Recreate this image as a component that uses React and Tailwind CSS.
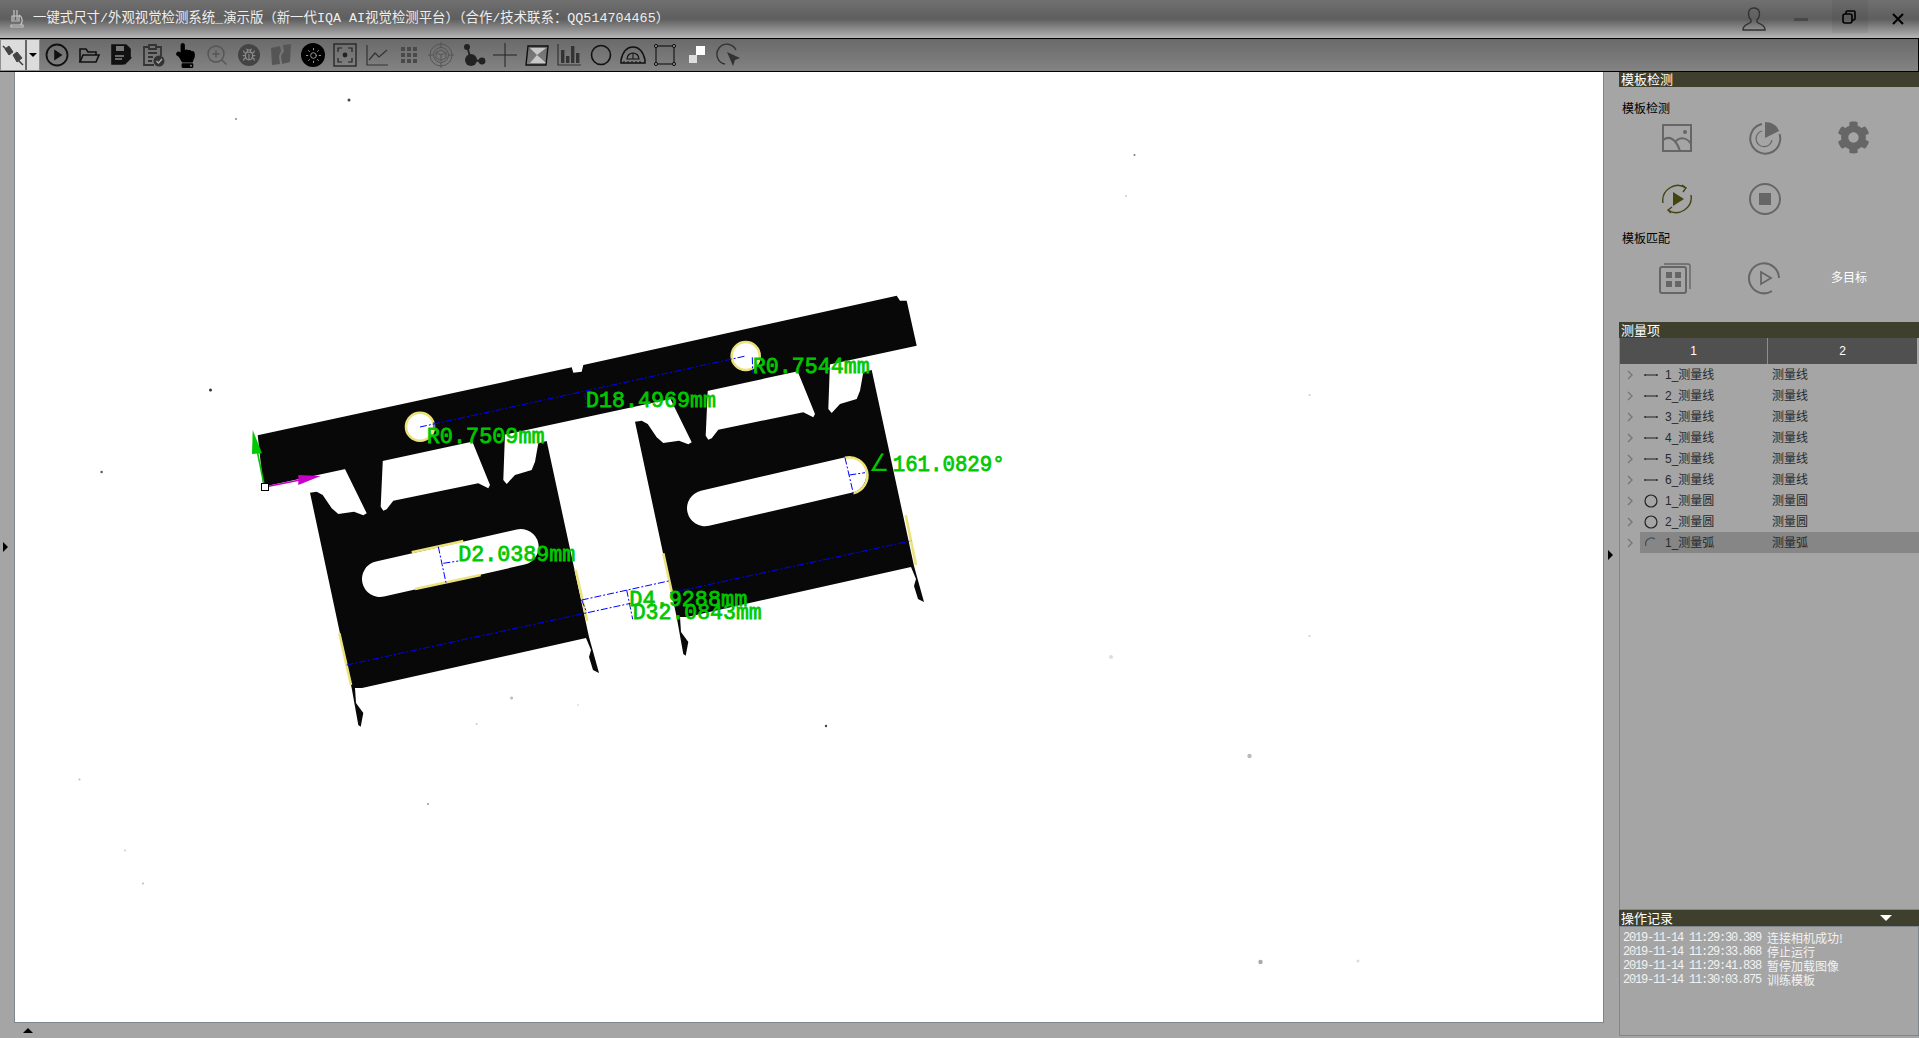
import { FaCog, FaHandPointUp } from 'react-icons/fa';
import { Bug, Sun, ZoomIn } from 'lucide-react';

const sans = "[font-family:'Liberation_Sans','Noto_Sans_CJK_SC',sans-serif]";

const Tool = ({ children }) => (
  <div className="w-8 h-full flex items-center justify-center shrink-0">
    <svg width="26" height="26" viewBox="0 0 26 26" fill="none" stroke="#111" strokeWidth="1.6">
      {children}
    </svg>
  </div>
);

const Toolbar = () => (
  <div className="h-[34px] flex items-stretch bg-gradient-to-b from-[#6a6a6a] to-[#838383] border-y border-r border-black shrink-0">
    {/* Plug button with its dropdown */}
    <div className="w-10 mr-[1px] flex shrink-0 bg-[#dcdcdc] border border-[#8f8f8f]">
      <div className="w-[26px] flex items-center justify-center border-r-2 border-[#666]">
        <svg width="22" height="22" viewBox="0 0 22 22" fill="#444" stroke="#444">
          <path d="M1 2l6 6M15 15l6 6" strokeWidth="1.6" />
          <path d="M3 5l4-3 4 6-4 3zM11 11l4-3 5 6-5 4z" />
        </svg>
      </div>
      <div className="flex-1 flex items-center justify-center">
        <div className="w-0 h-0 border-x-[4px] border-x-transparent border-t-[4px] border-t-black" />
      </div>
    </div>

    <Tool>
      <circle cx="13" cy="13" r="10.5" strokeWidth="1.8" />
      <path d="M11 9l6 4-6 4z" fill="#111" />
    </Tool>
    <Tool>
      <path d="M4 20V7h6l2 3h8v3" strokeWidth="1.6" />
      <path d="M4 20l3-7h16l-3 7z" strokeWidth="1.6" />
    </Tool>
    <Tool>
      <path d="M4 3h14l4 4v8l-7 7H4z" fill="#111" />
      <path d="M8 4h8v5H8z" fill="#777" stroke="none" />
      <path d="M7 14h9M7 17h7" stroke="#888" strokeWidth="1.4" />
      <path d="M16 22l7-7" strokeWidth="2.4" />
    </Tool>
    <Tool>
      <g stroke="#333" strokeWidth="1.8">
        <path d="M16 5h5v9M9 5H4v18h10" />
        <path d="M9 3h7v4H9zM8 11h9M8 15h5M8 19h4" />
      </g>
      <circle cx="19" cy="19" r="5.5" fill="#333" stroke="none" />
      <path d="M16.5 19l2 2 3.5-4" stroke="#aaa" strokeWidth="1.4" />
    </Tool>
    <div className="w-8 flex items-center justify-center shrink-0">
      <FaHandPointUp size={25} color="#000" />
    </div>
    <div className="w-8 flex items-center justify-center shrink-0">
      <ZoomIn size={24} color="#555" strokeWidth={1.4} />
    </div>
    <div className="w-8 flex items-center justify-center shrink-0">
      <div className="w-[22px] h-[22px] rounded-full bg-[#444] flex items-center justify-center">
        <Bug size={14} color="#8a8a8a" />
      </div>
    </div>
    <Tool>
      <path d="M3 6l9-2 1 5-2 5 1 8-8 1z" fill="#555" stroke="none" />
      <path d="M15 3l8-1-1 18-8 2-1-8 3-5z" fill="#555" stroke="none" />
    </Tool>
    <div className="w-8 flex items-center justify-center shrink-0">
      <div className="w-6 h-6 rounded-full bg-black flex items-center justify-center">
        <Sun size={17} color="#999" strokeWidth={1.4} />
      </div>
    </div>
    <Tool>
      <rect x="2" y="2" width="22" height="22" stroke="#222" strokeWidth="1.3" />
      <path d="M6 10V6h4M16 6h4v4M20 16v4h-4M10 20H6v-4" stroke="#222" strokeWidth="1.2" />
      <circle cx="13" cy="13" r="2.4" fill="#222" stroke="none" />
    </Tool>
    <Tool>
      <path d="M3 3v20h21" stroke="#333" strokeWidth="1.2" />
      <path d="M5 18l6-7 4 4 8-7" stroke="#333" strokeWidth="1.2" />
    </Tool>
    <Tool>
      <g fill="#4a4a4a" stroke="none">
        <rect x="5" y="5" width="4" height="4" />
        <rect x="11" y="5" width="4" height="4" />
        <rect x="17" y="5" width="4" height="4" />
        <rect x="5" y="11" width="4" height="4" />
        <rect x="11" y="11" width="4" height="4" />
        <rect x="17" y="11" width="4" height="4" />
        <rect x="5" y="17" width="4" height="4" />
        <rect x="11" y="17" width="4" height="4" />
        <rect x="17" y="17" width="4" height="4" />
      </g>
    </Tool>
    <Tool>
      <g stroke="#555" strokeWidth="1">
        <circle cx="13" cy="13" r="11" />
        <circle cx="13" cy="13" r="7.5" />
        <path d="M13 0v5M13 21v5M0 13h5M21 13h5" />
        <path d="M13 8l5 2.5v5.5l-5 2.5-5-2.5v-5.5zM8 10.5l5 2.5 5-2.5M13 13v5.5" />
      </g>
    </Tool>
    <Tool>
      <path d="M7 4l4 14M11 18l10 1" stroke="#222" strokeWidth="1.8" />
      <circle cx="7" cy="5" r="3" fill="#222" stroke="none" />
      <circle cx="11" cy="18" r="6" fill="#222" stroke="none" />
      <circle cx="22" cy="19" r="3.4" fill="#222" stroke="none" />
    </Tool>
    <Tool>
      <path d="M13 1v24M1 13h24" stroke="#222" strokeWidth="1" />
    </Tool>
    <Tool>
      <path d="M4 4h20l-2 19H2z" stroke="#111" strokeWidth="1.4" />
      <path d="M6 6h16l-9 7 9 8H6l7-8z" fill="#c8c8c8" stroke="none" />
    </Tool>
    <Tool>
      <path d="M2 2v21h23" stroke="#333" strokeWidth="1.2" />
      <g fill="#333" stroke="none">
        <rect x="5" y="8" width="3.4" height="13" />
        <rect x="10" y="14" width="3.4" height="7" />
        <rect x="15" y="4" width="3.4" height="17" />
        <rect x="20" y="11" width="3.4" height="10" />
      </g>
    </Tool>
    <Tool>
      <circle cx="13" cy="13" r="9.5" strokeWidth="1.6" />
    </Tool>
    <Tool>
      <path d="M1 21h24v-3C23 9 18 5 13 5S3 9 1 18z" strokeWidth="1.5" />
      <path d="M7 17a6 6 0 0 1 12 0z" strokeWidth="1.2" />
      <path d="M4 21v-2M8 21v-2M12 21v-2M16 21v-2M20 21v-2M13 11v6" strokeWidth="1" />
    </Tool>
    <Tool>
      <rect x="4" y="4" width="18" height="18" strokeWidth="1.1" />
      <g fill="#888" strokeWidth="1">
        <circle cx="4" cy="4" r="1.6" />
        <circle cx="22" cy="4" r="1.6" />
        <circle cx="4" cy="22" r="1.6" />
        <circle cx="22" cy="22" r="1.6" />
      </g>
    </Tool>
    <Tool>
      <rect x="12" y="4" width="9" height="9" fill="#fff" stroke="none" />
      <rect x="5" y="13" width="8" height="8" fill="#ddd" stroke="none" />
    </Tool>
    <Tool>
      <path d="M20 8A10 10 0 1 0 9 22" stroke="#333" strokeWidth="1.4" />
      <path d="M11 10l13 6-5 2-2 6z" fill="#333" stroke="none" />
    </Tool>
  </div>
);

const TitleBar = () => (
  <div className="h-[38px] flex items-center bg-gradient-to-b from-[#707070] via-[#5e5e5e] to-[#b6b6b6] shrink-0">
    <div className="w-[33px] flex justify-center shrink-0">
      <svg width="18" height="20" viewBox="0 0 18 20" fill="none" stroke="#c4c4c4" strokeWidth="1.2">
        <path d="M6 1v10M9 1v10M4 7h7v5H4zM3 18h12v-2H3zM11 6c4 2 4 8 1 10" />
      </svg>
    </div>
    <span className="text-[13.4px] text-[#eeeeee] [font-family:'Liberation_Mono','Noto_Sans_CJK_SC',monospace] whitespace-nowrap">
      一键式尺寸/外观视觉检测系统_演示版（新一代IQA AI视觉检测平台）（合作/技术联系：QQ514704465）
    </span>
    <div className="ml-auto flex items-center h-full">
      <svg width="26" height="26" viewBox="0 0 26 26" fill="none" stroke="#333" strokeWidth="1.4">
        <path d="M13 2c-4 0-5.500 3-5.500 6 0 3 1.500 5 2.500 6v2c-2 2-7 2-8 7v1h22v-1c-1-5-6-5-8-7v-2c1-1 2.500-3 2.500-6 0-3-1.500-6-5.500-6z" />
      </svg>
      <div className="w-[14px] h-[3px] bg-[#484848] ml-[27px]" />
      <div className="w-9 h-[33px] mb-[5px] ml-6 bg-black/5 flex items-center justify-center pr-[3px]">
        <svg width="14" height="14" viewBox="0 0 14 14" fill="none" stroke="#000" strokeWidth="1.6">
          <rect x="1" y="4" width="9" height="9" rx="2" />
          <path d="M4 4V2.500A1.500 1.500 0 0 1 5.500 1H12a1 1 0 0 1 1 1v6.500A1.500 1.500 0 0 1 11.500 10H10" />
        </svg>
      </div>
      <svg className="ml-6 mr-[15px]" width="12" height="12" viewBox="0 0 12 12" stroke="#000" strokeWidth="2">
        <path d="M1 1l10 10M11 1L1 11" />
      </svg>
    </div>
  </div>
);

const PANEL =
  '310,492.7 316.7,491.7 322.7,495 331.7,508.3 338.3,514 354,511.7 363.3,515.3 366.7,513.3 343,465 383,456 380.7,506.7 383.3,510.7 386.7,509.3 393.3,500.7 478.3,483.3 488.3,488.3 490,485 471.7,440 505,433 503.3,480 506.7,484 515,475 531.7,470 535,461.7 538.3,443.3 546.7,441 589,637 599,673 593,670 589,657 591,650 586,638 362,688 355,688 356,703 363.3,713 360.7,726.7 358.3,725 351.7,688.3';

const BAR =
  '257.7,435.3 571.7,367.3 573.3,372.7 581.7,371.7 583.3,365 896.7,295.7 900,300.7 906.7,300.7 916.7,345.7 263.3,486.7';

const specks = [
  [349, 100, 1.5, '#444'], [236, 119, 1, '#888'], [210.5, 390, 1.5, '#333'], [101.6, 472, 1.2, '#555'],
  [1134.5, 155, 1, '#777'], [1111, 657, 2, '#ddd'], [1249.5, 756, 2.2, '#bbb'], [1260.5, 962, 2.2, '#aaa'],
  [826, 726, 1.2, '#444'], [511.6, 698, 1.5, '#bbb'], [428, 804, 1, '#999'], [1309.5, 395, 1, '#ccc'],
  [1309.5, 636, 1, '#ccc'], [143, 883.6, 1, '#bbb'], [79.5, 779.6, 1, '#bbb'], [125, 850.5, 1, '#ccc'],
  [1126, 196, 1, '#ccc'], [476.7, 724, 1, '#ccc'], [578, 705, 1, '#ddd'], [1358, 961, 1.5, '#ddd'],
];

const blueLines = [
  [420, 427, 745.7, 356], [434, 422, 434, 428], [585, 393, 586, 408], [752.3, 357.3, 752.7, 372.7],
  [438.3, 546.7, 446, 582.7], [443.3, 563.3, 458.3, 561], [346.7, 665, 630.7, 603.3], [670, 593, 911.7, 540.7],
  [581.7, 600, 670, 580.7], [626.7, 590, 632.7, 619.3], [845, 457.7, 853.3, 493.3], [849.3, 475, 865, 472.7],
  [581.7, 600, 586.7, 612.3],
];

const yellowLines = [
  [411.7, 552.3, 463.3, 541], [415, 589, 480.7, 575], [575.7, 570, 587.3, 620.7],
  [339.3, 633.3, 351, 685], [663.3, 553.3, 671.7, 591.7], [905.7, 515, 916, 565],
];

const labels = [
  ['R0.7509mm', 426.7, 443.3, 118], ['D18.4969mm', 586, 407.3, 130], ['R0.7544mm', 752.7, 372.7, 117],
  ['D2.0389mm', 458.3, 561, 117], ['161.0829°', 892.7, 471, 112], ['D4.9288mm', 629.3, 606, 118],
  ['D32.0843mm', 632.7, 619.3, 129],
];

const Canvas = () => (
  <div className="h-[951px] bg-white border-x border-b border-[#7f878c] shrink-0">
    <svg width="1588" height="950" viewBox="15 72 1588 950" className="block">
      {specks.map(([x, y, r, c], i) => (
        <circle key={i} cx={x} cy={y} r={r} fill={c} />
      ))}
      <polygon points={BAR} fill="#080808" />
      <polygon points={PANEL} fill="#080808" />
      <polygon points={PANEL} fill="#080808" transform="translate(325 -71)" />
      <path d="M380 579L520.7 547M705 508.3L848.3 475" stroke="#fff" strokeWidth="36" strokeLinecap="round" />

      <circle cx="420" cy="426.7" r="14" fill="#fff" stroke="#ece27c" strokeWidth="2.6" />
      <circle cx="745.7" cy="356" r="14" fill="#fff" stroke="#ece27c" strokeWidth="2.6" />
      <path d="M845 457.7A18 18 0 0 1 853.3 493.3" fill="none" stroke="#ece27c" strokeWidth="2.6" />
      {yellowLines.map(([a, b, c, d], i) => (
        <line key={i} x1={a} y1={b} x2={c} y2={d} stroke="#ece27c" strokeWidth="2.6" />
      ))}
      {blueLines.map(([a, b, c, d], i) => (
        <line key={i} x1={a} y1={b} x2={c} y2={d} stroke="#0000ff" strokeWidth="1" strokeDasharray="7 2 2 2" />
      ))}

      {/* Origin arrows */}
      <line x1="264.5" y1="487" x2="257" y2="450" stroke="#00c800" strokeWidth="1.6" />
      <polygon points="252.7,430 262,453.3 252,454" fill="#00c800" />
      <line x1="265" y1="487" x2="300" y2="480" stroke="#c800c8" strokeWidth="1.6" />
      <polygon points="320.7,476 298.3,475 298.3,485" fill="#c800c8" />
      <rect x="261.5" y="483.5" width="7" height="7" fill="#fff" stroke="#000" />

      {labels.map(([t, x, y, w]) => (
        <text
          key={t}
          x={x}
          y={y}
          textLength={w}
          lengthAdjust="spacingAndGlyphs"
          fill="#00c800"
          stroke="#00c800"
          strokeWidth="0.8"
          fontSize="22"
          className="[font-family:'Liberation_Mono','DejaVu_Sans_Mono',monospace]"
        >
          {t}
        </text>
      ))}
      <text x="869" y="471" textLength="20" lengthAdjust="spacingAndGlyphs" fill="#00c800" fontSize="24" className="[font-family:'DejaVu_Sans',sans-serif]">
        ∠
      </text>
    </svg>
  </div>
);

const SectionHeader = ({ title, className, children }) => (
  <div className={`bg-[#3f3f2e] flex items-center pl-[2px] pr-[22px] justify-between text-[13px] leading-none text-white shrink-0 ${className} ${sans}`}>
    <span>{title}</span>
    {children}
  </div>
);

const PanelIcon = ({ children }) => (
  <svg width="34" height="34" viewBox="0 0 34 34" fill="none" stroke="#666" strokeWidth="2">
    {children}
  </svg>
);

const TemplatePanel = () => (
  <div className={`h-[235px] shrink-0 pl-[3px] ${sans}`}>
    <div className="h-[14px] mt-[15px] text-xs leading-[14px] text-black">模板检测</div>
    <div className="grid grid-cols-[88px_88px_88px] grid-rows-[34px_34px] gap-y-[27px] ml-[11px] mt-[5px] justify-items-center">
      <PanelIcon>
        <rect x="3" y="4" width="28" height="26" />
        <circle cx="25" cy="11" r="2" fill="#666" stroke="none" />
        <path d="M3 19c8-6 14 2 17 11M16 20c4-4 11-4 15 3" />
      </PanelIcon>
      <PanelIcon>
        <path d="M14 3A15 15 0 1 0 31.500 13" />
        <path d="M14 10a8 8 0 1 0 10 9" strokeWidth="1.2" />
        <path d="M17 17V1c6 0 12 3 14 9z" fill="#666" stroke="none" />
      </PanelIcon>
      <FaCog size={33} color="#666" />
      <PanelIcon>
        <path d="M26 6A15 15 0 0 0 3 21M8 28a15 15 0 0 0 23-15" stroke="#444410" strokeWidth="1.4" />
        <path d="M22 3l4 3-3 4M11 31l-3-3 4-3" stroke="#444410" strokeWidth="1.4" />
        <path d="M13 10l11 7-11 7z" fill="#444410" stroke="none" />
      </PanelIcon>
      <PanelIcon>
        <circle cx="17" cy="17" r="15" />
        <rect x="11" y="11" width="12" height="12" fill="#666" stroke="none" />
      </PanelIcon>
      <div />
    </div>
    <div className="h-[14px] mt-[16px] text-xs leading-[14px] text-black">模板匹配</div>
    <div className="grid grid-cols-[88px_88px_88px] ml-[11px] mt-[15px] h-[34px] items-center justify-items-center">
      <div className="-ml-1">
        <PanelIcon>
          <rect x="2" y="6" width="26" height="26" rx="2" />
          <path d="M6 3h24a2 2 0 0 1 2 2v23" strokeWidth="1.4" />
          <g fill="#666" stroke="none">
            <rect x="8" y="11" width="6" height="6" />
            <rect x="17" y="11" width="6" height="6" />
            <rect x="8" y="20" width="6" height="6" />
            <rect x="17" y="20" width="6" height="6" />
          </g>
        </PanelIcon>
      </div>
      <PanelIcon>
        <path d="M31 17A15 15 0 1 0 24 30" />
        <path d="M13 11l10 6-10 6z" strokeWidth="1.8" />
      </PanelIcon>
      <span className="text-xs text-white -ml-[8px]">多目标</span>
    </div>
  </div>
);

const treeItems = [
  ['line', '1_测量线', '测量线'], ['line', '2_测量线', '测量线'], ['line', '3_测量线', '测量线'],
  ['line', '4_测量线', '测量线'], ['line', '5_测量线', '测量线'], ['line', '6_测量线', '测量线'],
  ['circle', '1_测量圆', '测量圆'], ['circle', '2_测量圆', '测量圆'], ['arc', '1_测量弧', '测量弧'],
];

const TreeIcon = ({ type }) => (
  <svg width="16" height="16" viewBox="0 0 16 16" fill="none" stroke="#222">
    {type === 'line' && <path d="M2 8h12M2 7v2M14 7v2" strokeWidth="1.2" />}
    {type === 'circle' && <circle cx="8" cy="8" r="6" strokeWidth="1.2" />}
    {type === 'arc' && <path d="M3 11A6 6 0 0 1 12 4" stroke="#3c5060" strokeWidth="1.2" />}
  </svg>
);

const MeasureTable = () => (
  <div className={`flex-1 border-l border-[#7f878c] ${sans}`}>
    <div className="h-[26px] flex mr-[2px] text-xs text-white">
      <div className="w-[148px] bg-[#505050] flex items-center justify-center border-r border-[#8e8e8e]">1</div>
      <div className="flex-1 bg-[#505050] flex items-center justify-center">2</div>
    </div>
    {treeItems.map(([type, name, kind], i) => (
      <div key={i} className="h-[21px] flex text-xs text-[#2a2a2a]">
        <div className="w-5 shrink-0 flex items-center justify-center">
          <svg width="8" height="10" viewBox="0 0 8 10" fill="none" stroke="#777" strokeWidth="1.4">
            <path d="M2 1l4 4-4 4" />
          </svg>
        </div>
        <div className={`flex-1 flex items-center ${i === 8 ? 'bg-[#868686]' : ''}`}>
          <div className="w-[25px] flex justify-center pr-[3px]">
            <TreeIcon type={type} />
          </div>
          <div className="w-[107px]">{name}</div>
          <div>{kind}</div>
        </div>
      </div>
    ))}
  </div>
);

const logLines = [
  ['2019-11-14 11:29:30.389', '连接相机成功!'],
  ['2019-11-14 11:29:33.868', '停止运行'],
  ['2019-11-14 11:29:41.838', '暂停加载图像'],
  ['2019-11-14 11:30:03.875', '训练模板'],
];

const LogBox = () => (
  <div className="h-[110px] shrink-0 border border-[#7f878c] pt-[4px] pl-[3px]">
    {logLines.map(([time, msg]) => (
      <div key={time} className="h-[14px] flex items-center text-xs leading-[14px] text-[#f2f2f2] whitespace-nowrap">
        <span className="w-[144px] tracking-[-1.2px] [font-family:'Liberation_Mono',monospace]">{time}</span>
        <span className="[font-family:'Noto_Sans_CJK_SC',sans-serif]">{msg}</span>
      </div>
    ))}
  </div>
);

const App = () => (
  <div className="w-[1919px] h-[1038px] overflow-hidden flex flex-col bg-[#a5a5a5]">
    <TitleBar />
    <Toolbar />
    <div className="flex-1 flex min-h-0">
      {/* Left splitter */}
      <div className="w-[14px] h-[950px] flex items-center shrink-0 pl-[3px]">
        <div className="w-0 h-0 border-y-[5px] border-y-transparent border-l-[5px] border-l-black" />
      </div>

      <div className="w-[1590px] shrink-0 flex flex-col">
        <Canvas />
        <div className="pl-[9px] pt-[5px]">
          <div className="w-0 h-0 border-x-[5px] border-x-transparent border-b-[5px] border-b-black" />
        </div>
      </div>

      {/* Right splitter */}
      <div className="w-[15px] flex items-center shrink-0 pl-[4px]">
        <div className="w-0 h-0 border-y-[5px] border-y-transparent border-l-[5px] border-l-black" />
      </div>

      <div className="flex-1 flex flex-col min-w-0 pb-[2px]">
        <SectionHeader title="模板检测" className="h-[15px]" />
        <TemplatePanel />
        <SectionHeader title="测量项" className="h-4" />
        <MeasureTable />
        <div className="border-t border-[#7f878c]">
          <SectionHeader title="操作记录" className="h-4 pr-[27px]">
            <div className="w-0 h-0 border-x-[6px] border-x-transparent border-t-[6px] border-t-white" />
          </SectionHeader>
        </div>
        <LogBox />
      </div>
    </div>
  </div>
);

export default App;
